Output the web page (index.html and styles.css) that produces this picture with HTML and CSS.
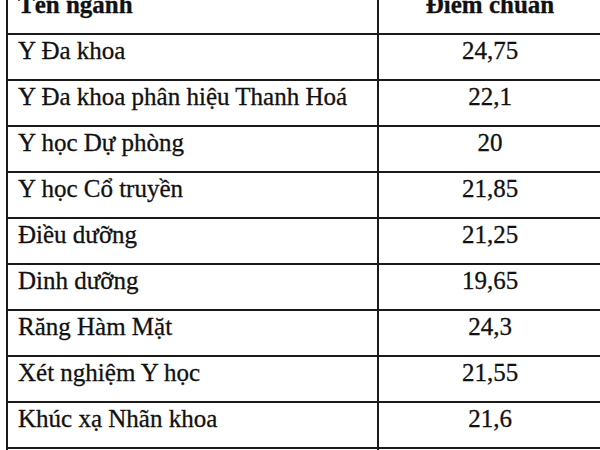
FILE: index.html
```html
<!DOCTYPE html>
<html lang="vi">
<head>
<meta charset="utf-8">
<link rel="stylesheet" href="styles.css">
</head>
<body>
<table class="scores">
  <thead>
    <tr><th class="name">Tên ngành</th><th class="score">Điểm chuẩn</th></tr>
  </thead>
  <tbody>
    <tr><td class="name">Y Đa khoa</td><td class="score">24,75</td></tr>
    <tr><td class="name">Y Đa khoa phân hiệu Thanh Hoá</td><td class="score">22,1</td></tr>
    <tr><td class="name">Y học Dự phòng</td><td class="score">20</td></tr>
    <tr><td class="name">Y học Cổ truyền</td><td class="score">21,85</td></tr>
    <tr><td class="name">Điều dưỡng</td><td class="score">21,25</td></tr>
    <tr><td class="name">Dinh dưỡng</td><td class="score">19,65</td></tr>
    <tr><td class="name">Răng Hàm Mặt</td><td class="score">24,3</td></tr>
    <tr><td class="name">Xét nghiệm Y học</td><td class="score">21,55</td></tr>
    <tr><td class="name">Khúc xạ Nhãn khoa</td><td class="score">21,6</td></tr>
    <tr><td class="name">&nbsp;</td><td class="score">&nbsp;</td></tr>
  </tbody>
</table>
</body>
</html>
```
FILE: styles.css
```css
html, body {
  margin: 0;
  padding: 0;
  background: #fff;
  overflow: hidden;
}
body {
  width: 600px;
  height: 450px;
  font-family: "Liberation Serif", "Times New Roman", Times, serif;
}
.scores {
  border-collapse: collapse;
  margin-left: 6px;
  margin-top: -13px;
  width: 597px;
  table-layout: fixed;
  font-size: 25px;
  color: #111;
}
.scores th,
.scores td {
  font-family: "Liberation Serif", "Times New Roman", Times, serif;
  border: 2px solid #1a1a1a;
  padding: 2px 0 0 10px;
  vertical-align: top;
  line-height: 28px;
  box-sizing: border-box;
  height: 46px;
  -webkit-text-stroke: 0.3px #111;
}
.scores th { font-weight: bold; }
.scores .name { width: 371px; text-align: left; }
.scores .score { text-align: center; padding-left: 0; }
```
